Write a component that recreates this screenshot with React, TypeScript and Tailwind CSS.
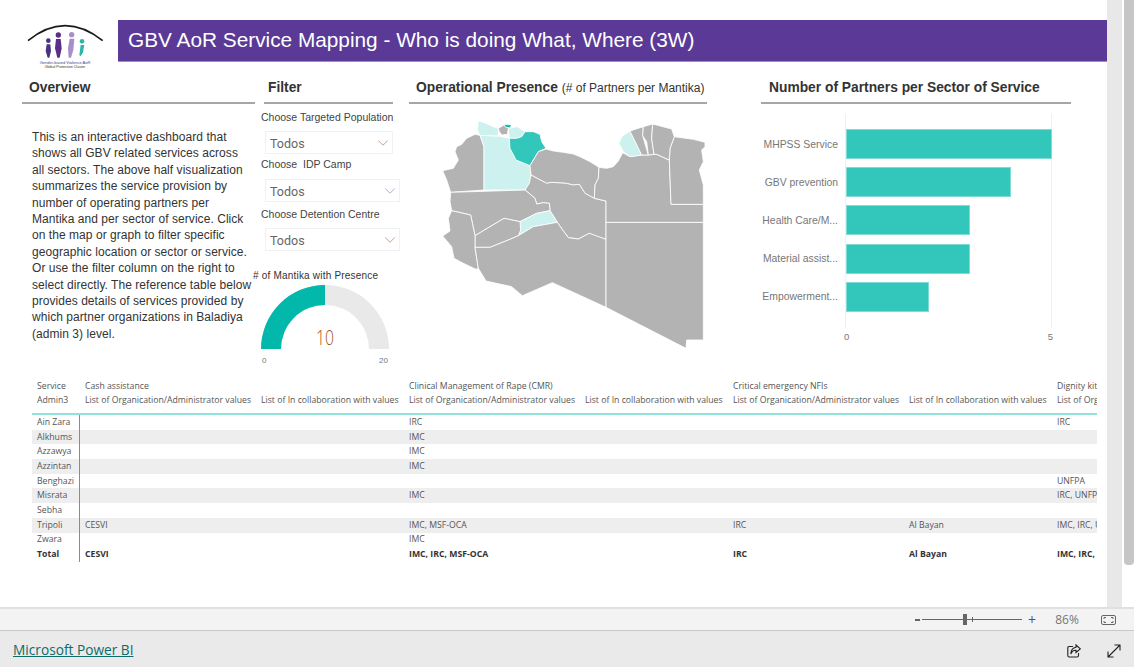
import { ChevronDown } from "lucide-react";

const arial = "font-['Liberation_Sans',Arial,sans-serif]";

const regions: { d: string; fill: string }[] = [
    { d: "M150,91 L135,88 L110,100 L95,118 L80,125 L75,140 L85,165 L70,190 L38,197 L50,225 L62,262 L162,255 L162,125 Z", fill: "#b3b3b3" },
    { d: "M150,91 L205,93 L238,100 L238,125 L258,165 L300,182 L303,210 L298,235 L285,255 L162,255 L162,125 Z", fill: "#ccf1ee" },
    { d: "M145,47 L172,57 L190,65 L205,70 L205,93 L150,91 L142,75 Z", fill: "#ccf1ee" },
    { d: "M235,70 L262,65 L285,80 L275,95 L260,100 L238,100 Z", fill: "#ccf1ee" },
    { d: "M205,70 L222,60 L235,70 L232,88 L215,90 L208,80 Z", fill: "#b3b3b3" },
    { d: "M222,58 L245,60 L240,69 L226,66 Z", fill: "#01b8aa" },
    { d: "M285,80 L310,80 L330,88 L335,110 L348,130 L325,140 L300,182 L258,165 L240,130 L238,100 L260,100 L275,95 Z", fill: "#33c6bb" },
    { d: "M348,132 L370,138 L400,142 L430,147 L450,155 L480,170 L507,187 L505,220 L495,240 L493,280 L465,265 L448,238 L430,240 L408,235 L365,232 L350,235 L303,210 L300,182 L325,140 Z", fill: "#b3b3b3" },
    { d: "M303,210 L350,235 L365,232 L408,235 L430,240 L448,238 L465,265 L493,280 L528,288 L528,403 L495,392 L478,385 L445,402 L415,398 L398,375 L382,352 L360,317 L358,295 L340,293 L320,297 L315,280 L285,255 L298,235 Z", fill: "#b3b3b3" },
    { d: "M62,262 L285,255 L315,280 L320,297 L340,293 L358,295 L360,317 L320,325 L270,350 L222,340 L135,392 L122,330 L65,317 L60,290 Z", fill: "#b3b3b3" },
    { d: "M320,325 L360,317 L382,352 L310,365 L265,392 L272,375 L270,350 Z", fill: "#ccf1ee" },
    { d: "M135,392 L222,340 L270,350 L272,375 L265,392 L235,405 L180,427 L135,427 Z", fill: "#b3b3b3" },
    { d: "M65,317 L122,330 L135,392 L135,427 L145,490 L138,493 L100,475 L72,460 L65,425 L38,393 L60,378 L55,340 Z", fill: "#b3b3b3" },
    { d: "M135,427 L180,427 L235,405 L265,392 L310,365 L382,352 L398,375 L415,398 L445,402 L478,385 L528,403 L528,607 L367,533 L277,572 L245,545 L168,528 L145,490 Z", fill: "#b3b3b3" },
    { d: "M528,352 L820,352 L820,705 L770,705 L768,730 L528,607 Z", fill: "#b3b3b3" },
    { d: "M507,187 L530,190 L550,185 L565,168 L578,143 L600,155 L635,150 L655,150 L672,148 L680,148 L718,165 L723,298 L820,298 L820,352 L528,352 L528,288 L493,280 L495,240 L505,220 Z", fill: "#b3b3b3" },
    { d: "M733,95 L790,103 L825,112 L825,125 L815,135 L820,170 L808,195 L820,240 L820,298 L723,298 L718,165 L720,130 Z", fill: "#b3b3b3" },
    { d: "M600,78 L635,150 L600,155 L580,140 L567,115 L575,95 Z", fill: "#ccf1ee" },
    { d: "M600,78 L640,65 L638,92 L655,150 L635,150 Z", fill: "#b3b3b3" },
    { d: "M640,65 L668,57 L665,100 L672,148 L655,150 L650,110 L638,92 Z", fill: "#b3b3b3" },
    { d: "M668,57 L725,72 L733,95 L720,130 L718,165 L680,148 L672,148 L665,100 Z", fill: "#b3b3b3" },
];

const bars = [
    { label: "MHPSS Service", width: 206 },
    { label: "GBV prevention", width: 165 },
    { label: "Health Care/M...", width: 124 },
    { label: "Material assist...", width: 124 },
    { label: "Empowerment...", width: 83 },
];

const overviewLines = [
    "This is an interactive dashboard that",
    "shows all GBV related services across",
    "all sectors. The above half visualization",
    "summarizes the service provision by",
    "number of operating partners per",
    "Mantika and per sector of service. Click",
    "on the map or graph to filter specific",
    "geographic location or sector or service.",
    "Or use the filter column on the right to",
    "select directly. The reference table below",
    "provides details of services provided by",
    "which partner organizations in Baladiya",
    "(admin 3) level.",
];

const colWidths = ["w-[176px]", "w-[148px]", "w-[176px]", "w-[148px]", "w-[176px]", "w-[148px]", "w-[45px]"];

const rows = [
    { name: "Ain Zara", cells: ["", "", "IRC", "", "", "", "IRC"] },
    { name: "Alkhums", cells: ["", "", "IMC", "", "", "", ""] },
    { name: "Azzawya", cells: ["", "", "IMC", "", "", "", ""] },
    { name: "Azzintan", cells: ["", "", "IMC", "", "", "", ""] },
    { name: "Benghazi", cells: ["", "", "", "", "", "", "UNFPA"] },
    { name: "Misrata", cells: ["", "", "IMC", "", "", "", "IRC, UNFPA"] },
    { name: "Sebha", cells: ["", "", "", "", "", "", ""] },
    { name: "Tripoli", cells: ["CESVI", "", "IMC, MSF-OCA", "", "IRC", "Al Bayan", "IMC, IRC, UNFPA"] },
    { name: "Zwara", cells: ["", "", "IMC", "", "", "", ""] },
];

const totals = ["CESVI", "", "IMC, IRC, MSF-OCA", "", "IRC", "Al Bayan", "IMC, IRC, UNFPA"];

const headTop = ["Cash assistance", "", "Clinical Management of Rape (CMR)", "", "Critical emergency NFIs", "", "Dignity kits"];
const org = "List of Organication/Administrator values";
const collab = "List of In collaboration with values";
const headBottom = [org, collab, org, collab, org, collab, org];

function SectionHeader({ className, children }: { className: string; children: React.ReactNode }) {
    return (
        <div className={`h-[42px] pt-[17px] border-b-2 border-[#a6a6a6] ${className}`}>
            <h2 className={`${arial} text-[13.8px] leading-[18px] font-bold text-[#333] whitespace-nowrap`}>
                {children}
            </h2>
        </div>
    );
}

function Slicer({ label, width, chevron, mt, gap }: { label: string; width: string; chevron: string; mt: string; gap: string }) {
    return (
        <div className={mt}>
            <p className={`${arial} text-[10.5px] leading-[14px] text-[#444] pl-2 whitespace-pre`}>{label}</p>
            <div className={`${width} h-[23px] ml-3 ${gap} border border-[#f1f1f1] flex items-center justify-between pl-1`}>
                <span className="font-['Roboto',sans-serif] text-[12.5px] text-[#666] pt-[3px]">Todos</span>
                <ChevronDown size={18} strokeWidth={1} className={chevron} />
            </div>
        </div>
    );
}

function Logo() {
    return (
        <svg width="90" height="60" viewBox="0 0 270 180" className="ml-5 shrink-0 overflow-visible">
            <path d="M24,77 Q135,-13 248,77" fill="none" stroke="#1a1a1a" strokeWidth="5" />
            <circle cx="85" cy="77" r="7" fill="#47357f" />
            <path d="M80,88 L91,88 L93,108 L88,128 L83,128 L77,108 Z" fill="#47357f" />
            <circle cx="115" cy="60" r="8" fill="#5b2e87" />
            <path d="M108,72 L122,72 L125,100 L119,128 L112,128 L105,100 Z" fill="#5b2e87" />
            <circle cx="155" cy="59" r="8" fill="#a88fc8" />
            <path d="M149,71 L163,71 L160,105 L153,128 L146,128 L144,100 Z" fill="#a88fc8" />
            <circle cx="186" cy="79" r="7" fill="#2db6a9" />
            <path d="M182,90 L193,90 L189,112 L182,124 L178,120 Z" fill="#2db6a9" />
            <text x="135" y="147" textAnchor="middle" fontSize="12" fill="#4a3f8c" fontFamily="Liberation Sans">Gender-based Violence AoR</text>
            <text x="135" y="160" textAnchor="middle" fontSize="11" fill="#333" fontFamily="Liberation Sans">Global Protection Cluster</text>
        </svg>
    );
}

function Gauge() {
    return (
        <div className="ml-2 w-[128px]">
            <svg width="128" height="65" viewBox="0 0 128 65" className="block">
                <path d="M0,64 A64,64 0 0 1 128,64 L108,64 A44,44 0 0 0 20,64 Z" fill="#e9e9e9" />
                <path d="M0,64 A64,64 0 0 1 64,0 L64,20 A44,44 0 0 0 20,64 Z" fill="#01b8aa" />
                <text x="64" y="60" textAnchor="middle" fontSize="21" fill="#a0561e" fontFamily="Open Sans" fontWeight="300" textLength="18" lengthAdjust="spacingAndGlyphs">10</text>
            </svg>
            <div className={`${arial} flex justify-between text-[8px] leading-[10px] mt-[6px] text-[#777] px-[1px]`}>
                <span>0</span>
                <span>20</span>
            </div>
        </div>
    );
}

function PartnerChart() {
    return (
        <div className="flex mt-[10px]">
            <div className="w-[84px] pt-[15px] shrink-0">
                {bars.map((b) => (
                    <div
                        key={b.label}
                        className={`${arial} h-[30px] mb-[8.2px] pt-[1px] flex items-center justify-end pr-[7px] text-[10.4px] text-[#777] whitespace-nowrap`}
                    >
                        {b.label}
                    </div>
                ))}
            </div>
            <div>
                <div className="w-[207px] h-[214px] border-x border-[#f0f0f0] pt-[15px]">
                    {bars.map((b) => (
                        <div
                            key={b.label}
                            className="h-[30px] mb-[8.2px] bg-[#33c6bb] border border-[#7fdcd4]"
                            style={{ width: b.width }}
                        />
                    ))}
                </div>
                <div className={`${arial} flex justify-between text-[9.5px] text-[#777] mt-[2px] -mx-[1px]`}>
                    <span>0</span>
                    <span>5</span>
                </div>
            </div>
        </div>
    );
}

function ReferenceTable() {
    return (
        <div className="ml-8 w-[1065px] h-[184px] overflow-hidden font-['Open_Sans',sans-serif] text-[8.7px] text-[#555] whitespace-nowrap">
            <div className="h-[37px] pt-[2px] border-b-2 border-[#8fe3d9]">
                <div className="flex h-[14px] items-center">
                    <div className="w-12 pl-[5px] shrink-0">Service</div>
                    {headTop.map((t, i) => (
                        <div key={i} className={`${colWidths[i]} pl-[5px] shrink-0 overflow-hidden`}>{t}</div>
                    ))}
                </div>
                <div className="flex h-[14px] items-center">
                    <div className="w-12 pl-[5px] shrink-0">Admin3</div>
                    {headBottom.map((t, i) => (
                        <div key={i} className={`${colWidths[i]} pl-[5px] shrink-0 overflow-hidden`}>{t}</div>
                    ))}
                </div>
            </div>
            {rows.map((r, idx) => (
                <div key={r.name} className={`flex h-[14.7px] items-center ${idx % 2 === 1 ? "bg-[#eeeeee]" : ""}`}>
                    <div className="w-12 h-full flex items-center pl-[5px] shrink-0 border-r border-[#2cb5a8]">{r.name}</div>
                    {r.cells.map((c, i) => (
                        <div key={i} className={`${colWidths[i]} pl-[5px] shrink-0 overflow-hidden`}>{c}</div>
                    ))}
                </div>
            ))}
            <div className="flex h-[14.7px] items-center font-bold text-[#333]">
                <div className="w-12 h-full flex items-center pl-[5px] shrink-0 border-r border-[#2cb5a8]">Total</div>
                {totals.map((c, i) => (
                    <div key={i} className={`${colWidths[i]} pl-[5px] shrink-0 overflow-hidden`}>{c}</div>
                ))}
            </div>
        </div>
    );
}

function ZoomBar() {
    return (
        <div className="h-6 bg-[#f3f3f3] border-t-2 border-[#e0e0e0] border-b border-b-[#c8c8c8] flex items-center justify-end shrink-0 font-['Open_Sans',sans-serif]">
            <span className="w-[5px] h-[2px] bg-[#666] mr-[2px]" />
            <div className="relative w-[100px] h-[1px] bg-[#666]">
                <span className="absolute left-[41px] -top-[5px] w-1 h-[11px] bg-[#666]" />
                <span className="absolute left-[50px] -top-[2px] w-[1px] h-[5px] bg-[#666]" />
            </div>
            <span className="ml-[6px] text-[14px] leading-none text-[#555]">+</span>
            <span className="ml-4 text-[12px] text-[#777] w-[30px] text-center">86%</span>
            <svg width="15" height="10" viewBox="0 0 15 10" fill="none" stroke="#666" strokeWidth="1" className="ml-[19px] mr-[18px]">
                <rect x="0.5" y="0.5" width="14" height="9" rx="1.5" />
                <path d="M3,4 V2.5 H5 M10,2.5 H12 V4 M3,6 V7.5 H5 M10,7.5 H12 V6" />
            </svg>
        </div>
    );
}

function Footer() {
    return (
        <div className="flex-1 bg-[#eaeaea] flex items-center justify-between pl-[13px] pr-[13px] pt-[3px]">
            <a className="font-['Open_Sans',sans-serif] text-[13.7px] text-[#0f6b66] underline">Microsoft Power BI</a>
            <div className="flex items-center gap-[26px]">
                <svg width="14" height="14" viewBox="0 0 14 14" fill="none" stroke="#222" strokeWidth="1.1">
                    <path d="M6,2.5 H2 Q0.8,2.5 0.8,3.8 V11.5 Q0.8,13 2.2,13 H10 Q11.5,13 11.5,11.5 V9" />
                    <path d="M9,1 L13.3,4.8 L9,8.5 V6.3 Q5.5,6 3.8,10 Q4,4.2 9,3.3 Z" />
                </svg>
                <svg width="14" height="14" viewBox="0 0 14 14" fill="none" stroke="#222" strokeWidth="1.1">
                    <path d="M1,13 L13,1 M7.5,1 H13 V6.5 M1,7.5 V13 H6.5" />
                </svg>
            </div>
        </div>
    );
}

export default function App() {
    return (
        <div className={`${arial} w-[1134px] h-screen flex flex-col bg-white overflow-hidden`}>
            <div className="h-[607px] flex shrink-0">
                <div className="w-[1107px] pt-[15px] shrink-0">
                    <div className="flex h-[47px]">
                        <Logo />
                        <div className="ml-2 mt-[5px] flex-1 h-[42px] bg-[#5a3a96] border-b border-[#a08cc8] flex items-center pl-[10px] pb-[2px]">
                            <h1 className="text-[20.8px] text-white whitespace-nowrap">
                                GBV AoR Service Mapping - Who is doing What, Where (3W)
                            </h1>
                        </div>
                    </div>

                    <div className="flex h-[316px] pl-[22px]">
                        <div className="w-[233px] shrink-0">
                            <SectionHeader className="pl-[7px]">Overview</SectionHeader>
                            <p className="mt-[25px] pl-[10px] text-[12px] leading-[16.4px] text-[#333] tracking-[0.05px] whitespace-nowrap">
                                {overviewLines.map((line) => (
                                    <span key={line} className="block">{line}</span>
                                ))}
                            </p>
                        </div>

                        <div className="w-[152px] ml-[-2px] shrink-0">
                            <SectionHeader className="ml-[11px] w-[129px] pl-1">Filter</SectionHeader>
                            <Slicer label="Choose Targeted Population" width="w-[128px]" chevron="text-[#b8805a]" mt="mt-[6px]" gap="mt-[7px]" />
                            <Slicer label="Choose  IDP Camp" width="w-[135px]" chevron="text-[#7f9cc4]" mt="mt-[3px]" gap="mt-2" />
                            <Slicer label="Choose Detention Centre" width="w-[135px]" chevron="text-[#b8805a]" mt="mt-[5px]" gap="mt-[7px]" />
                            <p className={`${arial} mt-[18px] text-[10px] leading-[14px] text-[#333] tracking-[0.2px] whitespace-nowrap`}># of Mantika with Presence</p>
                            <div className="mt-[2px]">
                                <Gauge />
                            </div>
                        </div>

                        <div className="w-[298px] ml-1 shrink-0">
                            <SectionHeader className="pl-[7px]">
                                Operational Presence{" "}
                                <span className="font-normal text-[12px]">(# of Partners per Mantika)</span>
                            </SectionHeader>
                            <svg width="290" height="250" viewBox="0 0 870 750" className="ml-[21px] mt-[1px]">
                                {regions.map((r, i) => (
                                    <path key={i} d={r.d} fill={r.fill} stroke="#ffffff" strokeWidth="2.5" strokeLinejoin="round" />
                                ))}
                            </svg>
                        </div>

                        <div className="w-[310px] ml-[54px] shrink-0">
                            <SectionHeader className="pl-2">Number of Partners per Sector of Service</SectionHeader>
                            <PartnerChart />
                        </div>
                    </div>

                    <ReferenceTable />
                </div>
                <div className="w-[15px] bg-[#e8e8e8] shrink-0" />
                <div className="ml-[2px] w-[10px] h-[565px] bg-[#c6c6c6] rounded-b-[4px] shrink-0" />
            </div>
            <ZoomBar />
            <Footer />
        </div>
    );
}
